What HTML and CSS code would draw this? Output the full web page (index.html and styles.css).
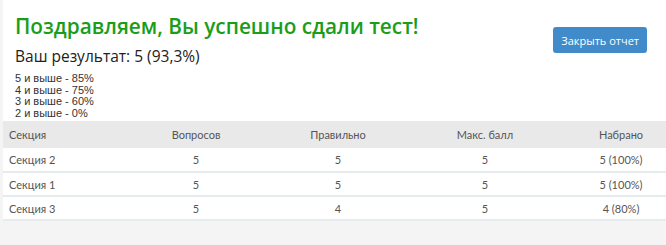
FILE: index.html
```html
<!DOCTYPE html>
<html lang="ru">
<head>
    <meta charset="UTF-8">
    <title>Результат теста</title>
    <link rel="stylesheet" href="styles.css">
</head>
<body>
    <div class="report">
        <div class="report-head">
            <div class="summary">
                <h1 class="title">Поздравляем, Вы успешно сдали тест!</h1>
                <h2 class="score">Ваш результат: 5 (93,3%)</h2>
                <ul class="scale">
                    <li>5 и выше - 85%</li>
                    <li>4 и выше - 75%</li>
                    <li>3 и выше - 60%</li>
                    <li>2 и выше - 0%</li>
                </ul>
            </div>
            <button type="button" class="close-btn">Закрыть отчет</button>
        </div>
        <table class="sections">
            <colgroup>
                <col class="col-name">
                <col class="col-q">
                <col class="col-ok">
                <col class="col-max">
                <col class="col-got">
            </colgroup>
            <thead>
                <tr>
                    <th>Секция</th>
                    <th>Вопросов</th>
                    <th>Правильно</th>
                    <th>Макс. балл</th>
                    <th>Набрано</th>
                </tr>
            </thead>
            <tbody>
                <tr>
                    <td>Секция 2</td>
                    <td>5</td>
                    <td>5</td>
                    <td>5</td>
                    <td>5 (100%)</td>
                </tr>
                <tr>
                    <td>Секция 1</td>
                    <td>5</td>
                    <td>5</td>
                    <td>5</td>
                    <td>5 (100%)</td>
                </tr>
                <tr>
                    <td>Секция 3</td>
                    <td>5</td>
                    <td>4</td>
                    <td>5</td>
                    <td>4 (80%)</td>
                </tr>
            </tbody>
        </table>
    </div>
</body>
</html>
```

FILE: styles.css
```css
* {
    margin: 0;
    padding: 0;
    box-sizing: border-box;
}
body {
    background-color: #F4F4F4;
    font-family: 'Open Sans', Arial, sans-serif;
    color: #222;
}
.report {
    margin-left: 3px;
    background-color: #FFFFFF;
}
.report-head {
    display: flex;
    justify-content: space-between;
    align-items: flex-start;
    padding: 12px 19px 2px 12px;
}
.title {
    font-size: 20.8px;
    font-weight: 600;
    line-height: 28px;
    color: #1A9E1A;
}
.score {
    margin-top: 5px;
    font-size: 15.5px;
    font-weight: 400;
    line-height: 22px;
    color: #222;
}
.scale {
    list-style: none;
    margin-top: 6px;
    font-family: 'Liberation Sans', Arial, sans-serif;
    font-size: 11px;
    line-height: 11.5px;
    color: #333;
}
.close-btn {
    margin-top: 15px;
    padding: 0 8px;
    height: 26px;
    border: none;
    border-radius: 3px;
    background-color: #428BCA;
    color: #FFFFFF;
    font-family: 'Open Sans', Arial, sans-serif;
    font-size: 11px;
    cursor: pointer;
}
.sections {
    width: 100%;
    table-layout: fixed;
    border-collapse: collapse;
    font-family: Lato, Arial, sans-serif;
    font-size: 11px;
    color: #555;
}
.col-name { width: 107px; }
.col-q { width: 172px; }
.col-ok { width: 112px; }
.col-max { width: 182px; }
.col-got { width: 90px; }
.sections th {
    height: 27px;
    padding: 0 6px;
    background-color: #E9E9E9;
    font-weight: 400;
    text-align: center;
}
.sections td {
    height: 24px;
    padding: 0 6px;
    border-bottom: 2px solid #E6ECEE;
    text-align: center;
}
.sections th:first-child,
.sections td:first-child {
    text-align: left;
}
```
